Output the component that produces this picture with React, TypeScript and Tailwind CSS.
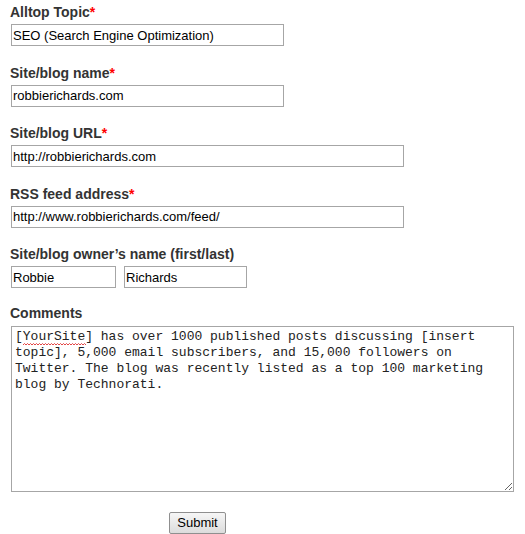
import React from 'react';

const fields = [
  { label: 'Alltop Topic', value: 'SEO (Search Engine Optimization)', width: 'w-[273px]', required: true },
  { label: 'Site/blog name', value: 'robbierichards.com', width: 'w-[273px]', required: true },
  { label: 'Site/blog URL', value: 'http://robbierichards.com', width: 'w-[393px]', required: true },
  { label: 'RSS feed address', value: 'http://www.robbierichards.com/feed/', width: 'w-[393px]', required: true },
];

const inputCls =
  'h-[22px] border border-[#a6a6a6] bg-white px-[1px] py-0 text-[13px] text-black outline-none font-["Liberation_Sans",Arial,sans-serif]';

function Label({ text, required }: { text: string; required?: boolean }) {
  return (
    <div className="text-[14px] font-bold leading-[16px] text-[#333333]">
      {text}
      {required && <span className="text-[#ff0000]">*</span>}
    </div>
  );
}

export default function App() {
  return (
    <div className='min-h-[534px] w-[525px] bg-white pl-[10px] pt-[4px] font-["Liberation_Sans",Arial,sans-serif]'>
      {fields.map((f) => (
        <div key={f.label} className="mb-[18.5px]">
          <Label text={f.label} required={f.required} />
          <input className={`${inputCls} ${f.width} ml-[1px] mt-[4px] block`} defaultValue={f.value} />
        </div>
      ))}

      <div className="mb-[17px]">
        <Label text="Site/blog owner’s name (first/last)" />
        <div className="ml-[1px] mt-[4px] flex gap-[8px]">
          <input className={`${inputCls} w-[105px]`} defaultValue="Robbie" />
          <input className={`${inputCls} w-[123px]`} defaultValue="Richards" />
        </div>
      </div>

      <div>
        <Label text="Comments" />
        <div className="relative ml-[1px] mt-[5px] w-[503px]">
          <textarea
            className='block h-[166px] w-[503px] border border-[#a6a6a6] bg-white py-[2px] pl-[3px] pr-[2px] text-[13px] leading-[16px] text-[#222] outline-none font-["Liberation_Mono","Courier_New",monospace]'
            spellCheck={false}
            defaultValue="[YourSite] has over 1000 published posts discussing [insert topic], 5,000 email subscribers, and 15,000 followers on Twitter. The blog was recently listed as a top 100 marketing blog by Technorati."
          />
          {/* spellcheck squiggle under "YourSite" */}
          <svg className="pointer-events-none absolute left-[12px] top-[17px]" width="63" height="3" viewBox="0 0 63 3">
            <polyline
              points="0,2 1.5,0.5 3,2 4.5,0.5 6,2 7.5,0.5 9,2 10.5,0.5 12,2 13.5,0.5 15,2 16.5,0.5 18,2 19.5,0.5 21,2 22.5,0.5 24,2 25.5,0.5 27,2 28.5,0.5 30,2 31.5,0.5 33,2 34.5,0.5 36,2 37.5,0.5 39,2 40.5,0.5 42,2 43.5,0.5 45,2 46.5,0.5 48,2 49.5,0.5 51,2 52.5,0.5 54,2 55.5,0.5 57,2 58.5,0.5 60,2 61.5,0.5 63,2"
              fill="none"
              stroke="#e03030"
              strokeWidth="0.9"
            />
          </svg>
        </div>
      </div>

      <div className="mt-[18px] pl-[159px]">
        <button className="h-[22px] w-[57px] rounded-[2px] border border-[#8f8f8f] bg-gradient-to-b from-[#f6f6f6] to-[#dcdcdc] text-[13px] leading-none text-black">
          Submit
        </button>
      </div>
    </div>
  );
}
